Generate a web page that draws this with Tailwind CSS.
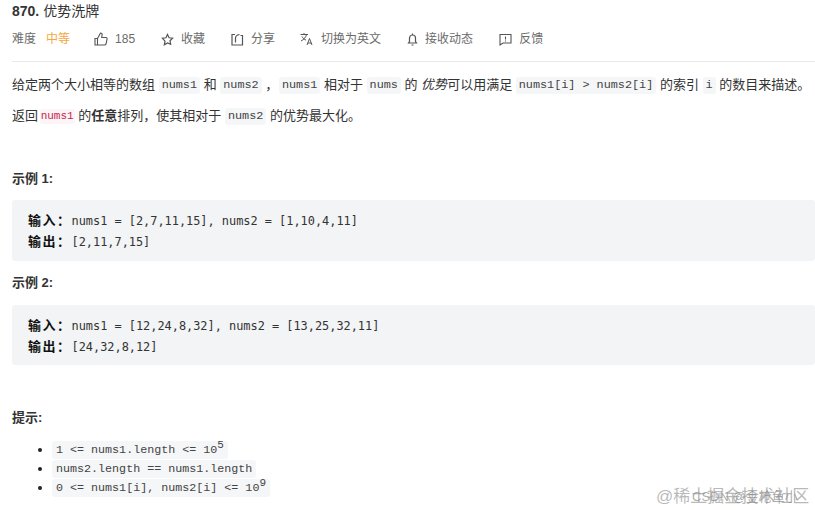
<!DOCTYPE html>
<html lang="zh">
  <head>
    <title>870. 优势洗牌</title>
    <meta charset="UTF-8" />
    <script src="https://cdn.jsdelivr.net/npm/@tailwindcss/browser@4"></script>
  </head>

  <body class="relative h-[510px] w-[815px] overflow-hidden bg-white font-['Liberation_Sans','Noto_Sans_CJK_SC',sans-serif] text-[12px] text-[#262626]">
    <div class="pl-3">
      <h1 class="flex h-[22px] items-center text-[14px] font-bold text-[#333]">870. <span class="ml-1 font-normal">优势洗牌</span></h1>

      <div class="mt-[6px] flex h-[22px] items-center text-[12px] text-[#6b6b6b]">
        <span>难度</span>
        <span class="ml-[10px] text-[#f5a742]">中等</span>
        <svg class="ml-[24px]" width="14" height="14" viewBox="0 0 14 14" fill="none" stroke="#555" stroke-width="1.1"><path d="M1 6.5h2.5V13H1zM3.5 6.5 6.5 1c1.2 0 1.8.8 1.6 2L7.700 5.500H12c.8 0 1.300.7 1.100 1.500L12 12c-.2.700-.6 1-1.300 1H3.500" /></svg>
        <span class="ml-[7px]">185</span>
        <svg class="ml-[26px]" width="13" height="13" viewBox="0 0 14 14" fill="none" stroke="#555" stroke-width="1.300"><path d="m7 1.500 1.700 3.600 3.800.5-2.800 2.700.7 3.900L7 10.800l-3.400 1.900.7-3.900L1.500 5.600l3.800-.5z" /></svg>
        <span class="ml-[7px]">收藏</span>
        <svg class="ml-[26px]" width="13" height="13" viewBox="0 0 13 13" fill="none" stroke="#555" stroke-width="1.200"><path d="M4 1.500H1v10.500h10.500V2.500H9.500M4.500 9.500V5c0-2 1.500-3 4-3.500" /></svg>
        <span class="ml-[7px]">分享</span>
        <svg class="ml-[25px]" width="14" height="14" viewBox="0 0 14 14" fill="none" stroke="#555" stroke-width="1"><path d="M.5 2.500h7.500M4 1v1.500M6.500 2.500C6 5 4 7.500 1 9M2 4.500C3 6.500 4.500 7.500 6 8.200M7 13l2.500-6.500L12 13M7.800 11h3.500" /></svg>
        <span class="ml-[7px]">切换为英文</span>
        <svg class="ml-[26px]" width="11" height="13" viewBox="0 0 11 13" fill="none" stroke="#555" stroke-width="1.200"><path d="M1.500 10h8L8.500 8.500V5c0-1.700-1.300-3-3-3s-3 1.300-3 3v3.500zM5.500 .5V2M4.500 12h2" /></svg>
        <span class="ml-[7px]">接收动态</span>
        <svg class="ml-[26px]" width="13" height="13" viewBox="0 0 13 13" fill="none" stroke="#555" stroke-width="1.100"><path d="M1 1.500h11v8.500H4L1 12zM6.500 3.500V6.500M6.500 7.500v1" /></svg>
        <span class="ml-[7px]">反馈</span>
      </div>

      <div class="mt-[11px] h-px bg-[#e8e8e8]"></div>

      <p class="mt-[13px] flex h-[20px] items-center whitespace-pre text-[13px] text-[#333]">给定两个大小相等的数组 <code class="rounded-[3px] bg-[#f5f6f7] px-[3px] font-['Liberation_Mono',monospace] text-[11.800px] leading-[17px] text-[#444]">nums1</code> 和 <code class="rounded-[3px] bg-[#f5f6f7] px-[3px] font-['Liberation_Mono',monospace] text-[11.800px] leading-[17px] text-[#444]">nums2</code> ， <code class="-ml-[3px] rounded-[3px] bg-[#f5f6f7] px-[3px] font-['Liberation_Mono',monospace] text-[11.800px] leading-[17px] text-[#444]">nums1</code> 相对于 <code class="rounded-[3px] bg-[#f5f6f7] px-[3px] font-['Liberation_Mono',monospace] text-[11.800px] leading-[17px] text-[#444]">nums</code> 的 <em>优势</em>可以用满足 <code class="rounded-[3px] bg-[#f5f6f7] px-[3px] font-['Liberation_Mono',monospace] text-[11.800px] leading-[17px] text-[#444]">nums1[i] &gt; nums2[i]</code> 的索引 <code class="rounded-[3px] bg-[#f5f6f7] px-[3px] font-['Liberation_Mono',monospace] text-[11.800px] leading-[17px] text-[#444]">i</code> 的数目来描述。</p>

      <p class="mt-[11px] flex h-[20px] items-center whitespace-pre text-[13px] text-[#333]">返回 <code class="-ml-[2px] rounded-[3px] bg-[#fbf5f7] px-[1px] font-['Liberation_Mono',monospace] text-[11px] leading-[15px] text-[#c7254e]">nums1</code> 的<strong>任意</strong>排列，使其相对于 <code class="rounded-[3px] bg-[#f5f6f7] px-[3px] font-['Liberation_Mono',monospace] text-[11.800px] leading-[17px] text-[#444]">nums2</code> 的优势最大化。</p>

      <h2 class="mt-[44px] h-[18px] text-[13px] leading-[18px] font-bold text-[#333]">示例 1:</h2>

      <pre class="mt-[12px] h-[61px] rounded-[3px] bg-[#f2f4f5] pt-[10px] pl-4 font-['DejaVu_Sans_Mono','Noto_Sans_CJK_SC',monospace] text-[11.900px] leading-[20px] text-[#333]"><strong class="font-['Noto_Sans_CJK_SC',sans-serif] text-[13px] tracking-[1.500px] text-[#111]">输入：</strong>nums1 = [2,7,11,15], nums2 = [1,10,4,11]
<strong class="font-['Noto_Sans_CJK_SC',sans-serif] text-[13px] tracking-[1.500px] text-[#111]">输出：</strong>[2,11,7,15]</pre>

      <h2 class="mt-[13px] h-[18px] text-[13px] leading-[18px] font-bold text-[#333]">示例 2:</h2>

      <pre class="mt-[13px] h-[60px] rounded-[3px] bg-[#f2f4f5] pt-[10px] pl-4 font-['DejaVu_Sans_Mono','Noto_Sans_CJK_SC',monospace] text-[11.900px] leading-[20px] text-[#333]"><strong class="font-['Noto_Sans_CJK_SC',sans-serif] text-[13px] tracking-[1.500px] text-[#111]">输入：</strong>nums1 = [12,24,8,32], nums2 = [13,25,32,11]
<strong class="font-['Noto_Sans_CJK_SC',sans-serif] text-[13px] tracking-[1.500px] text-[#111]">输出：</strong>[24,32,8,12]</pre>

      <h2 class="mt-[44px] h-[18px] text-[13px] leading-[18px] font-bold text-[#333]">提示:</h2>

      <ul class="mt-[13px] list-disc pl-[40px] text-[#333] marker:text-[#222]">
        <li class="h-[19px] leading-[19px]"><code class="rounded-[3px] bg-[#f5f6f7] px-[4px] py-[2px] font-['Liberation_Mono',monospace] text-[11.700px] text-[#444]">1 &lt;= nums1.length &lt;= 10<sup class="text-[11px]">5</sup></code></li>
        <li class="h-[19px] leading-[19px]"><code class="rounded-[3px] bg-[#f5f6f7] px-[4px] py-[2px] font-['Liberation_Mono',monospace] text-[11.700px] text-[#444]">nums2.length == nums1.length</code></li>
        <li class="h-[19px] leading-[19px]"><code class="rounded-[3px] bg-[#f5f6f7] px-[4px] py-[2px] font-['Liberation_Mono',monospace] text-[11.700px] text-[#444]">0 &lt;= nums1[i], nums2[i] &lt;= 10<sup class="text-[11px]">9</sup></code></li>
      </ul>
    </div>

    <div class="absolute top-[484px] left-[656px] text-[17px] whitespace-nowrap text-[#9a9a9a]/70">@稀土掘金技术社区</div>
    <div class="absolute top-[487px] left-[692px] text-[13px] whitespace-nowrap text-[#888]/70">CSDN @金枪鱼小</div>
  </body>
</html>
